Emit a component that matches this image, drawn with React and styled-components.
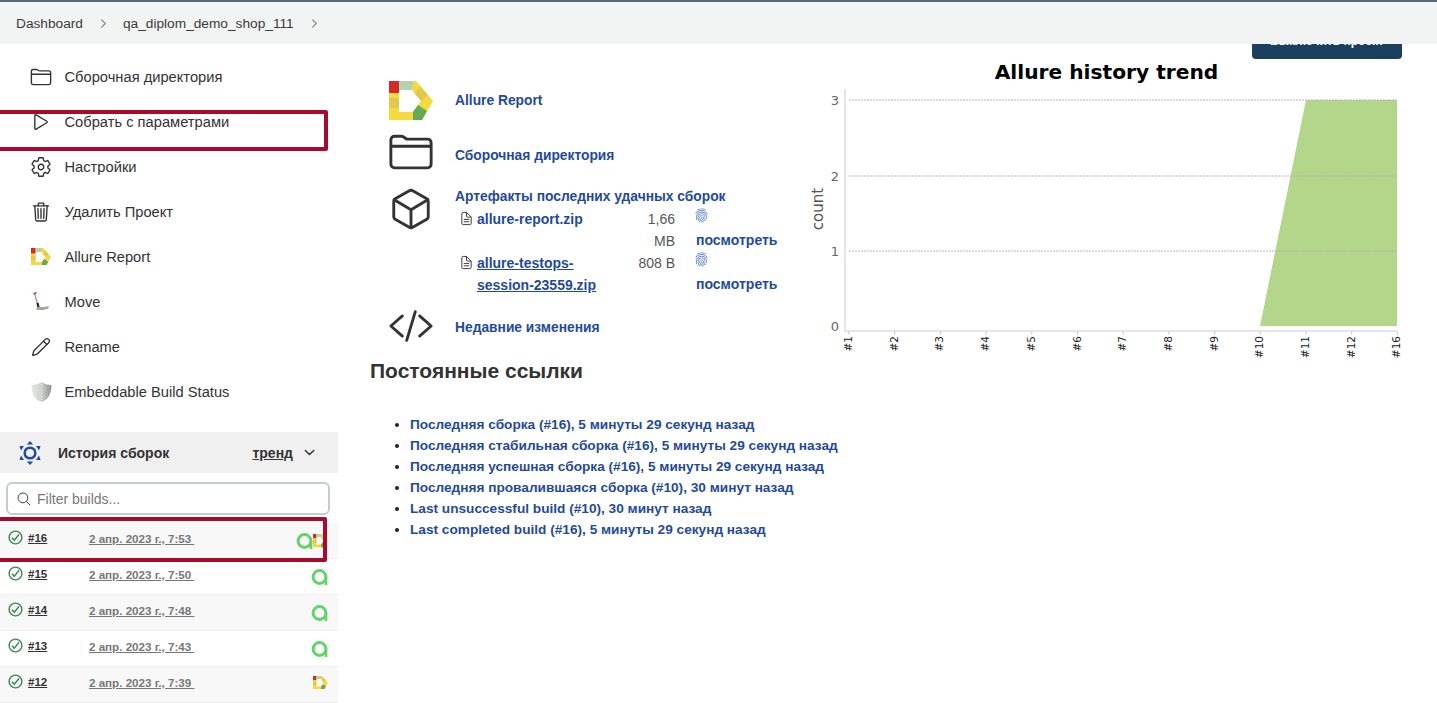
import React from 'react';
import styled, { createGlobalStyle } from 'styled-components';
import {
    IoFolderOutline, IoPlayOutline, IoSettingsOutline, IoTrashOutline,
    IoCubeOutline, IoCodeSlashOutline, IoSearchOutline, IoChevronForward, IoChevronDown,
    IoCheckmarkCircleOutline, IoDocumentTextOutline, IoFingerPrint,
} from 'react-icons/io5';
import { Pencil } from 'lucide-react';

const GlobalStyle = createGlobalStyle`
    html, body {
        margin: 0;
        height: 703px;
        overflow: hidden;
        background: #fff;
        color: #333;
        font-family: 'Liberation Sans', Arial, sans-serif;
    }
`;

const Header = styled.header`
    position: relative;
    z-index: 2;
    display: flex;
    align-items: center;
    height: 42px;
    padding-left: 16px;
    border-top: 2px solid #56677a;
    background: #f2f3f3;
    font-size: 13.7px;
`;
const Crumb = styled.span`
    color: #3a3a3a;
`;
const CrumbArrow = styled.span`
    display: flex;
    margin: 0 13px 0 14px;
    color: #888;
    font-size: 13px;
`;

const Body = styled.div`
    display: flex;
`;

const Sidebar = styled.aside`
    position: relative;
    flex: 0 0 338px;
    padding-top: 10px;
`;
const NavItem = styled.div`
    display: flex;
    align-items: center;
    height: 45px;
    padding-left: 30px;
    font-size: 14.7px;
    color: #333;
`;
const NavIcon = styled.span`
    display: flex;
    justify-content: center;
    flex: 0 0 22px;
    margin-right: 12.500px;
    font-size: 22px;
    color: #333;
`;

const HistoryBar = styled.div`
    display: flex;
    align-items: center;
    height: 41px;
    margin-top: 18px;
    padding: 0 21px 0 19px;
    background: #f0f0f1;
    font-size: 14px;
    font-weight: 700;
`;
const HistoryTitle = styled.span`
    flex: 1;
    margin-left: 17px;
`;
const TrendLink = styled.span`
    margin-right: 9px;
    text-decoration: underline;
`;

const FilterBox = styled.div`
    display: flex;
    align-items: center;
    box-sizing: border-box;
    height: 33px;
    margin: 9px 8px 8px 6px;
    padding-left: 8px;
    border: 2px solid #c6ccd1;
    border-radius: 6px;
    color: #777;
    font-size: 14px;
`;
const FilterIcon = styled.span`
    display: flex;
    margin-right: 5px;
    color: #444;
    font-size: 16px;
`;

const BuildRow = styled.div`
    display: flex;
    align-items: flex-start;
    box-sizing: border-box;
    height: 36px;
    padding: 6px 10px 0 7px;
    border-bottom: 1px solid #f0f0f0;
    background: ${(props) => (props.$shaded ? '#f8f8f8' : '#fff')};
`;
const BuildStatus = styled.span`
    display: flex;
    margin-right: 4px;
    color: #3d8a55;
    font-size: 17px;
    svg path {
        stroke-width: 44px;
    }
`;
const BuildNumber = styled.span`
    flex: 0 0 61px;
    padding-top: 3px;
    color: #333;
    font-size: 11.5px;
    font-weight: 700;
    text-decoration: underline;
`;
const BuildDate = styled.span`
    flex: 1;
    padding-top: 3px;
    color: #777;
    font-size: 11.6px;
    font-weight: 700;
    text-decoration: underline;
    white-space: pre;
`;
const BuildBadges = styled.span`
    display: flex;
    align-items: center;
    margin-top: 3px;
`;

const Highlight = styled.div`
    position: absolute;
    left: -4px;
    top: ${(props) => props.$top}px;
    box-sizing: border-box;
    width: ${(props) => props.$width}px;
    height: ${(props) => props.$height}px;
    border: 4px solid #a80a2b;
    border-radius: 2px;
`;

const Main = styled.main`
    position: relative;
    flex: 1;
    padding: 8px 0 0 32px;
`;
const DisableButton = styled.button`
    position: absolute;
    top: -21px;
    right: 35px;
    width: 150px;
    height: 36px;
    border: none;
    border-radius: 4px;
    background: #1b3f5f;
    color: #fff;
    font-family: inherit;
    font-size: 12px;
    font-weight: 700;
`;
const TopRow = styled.div`
    display: flex;
    align-items: flex-start;
`;
const ProjectLinks = styled.div`
    flex: 0 0 422px;
    margin-left: 18px;
    padding-top: 29px;
`;
const ProjectRow = styled.div`
    display: flex;
    align-items: ${(props) => props.$align || 'center'};
    height: ${(props) => props.$height || 40}px;
    margin-bottom: ${(props) => props.$gap}px;
`;
const ProjectIcon = styled.span`
    display: flex;
    justify-content: center;
    align-self: flex-start;
    flex: 0 0 46px;
    min-width: 0;
    margin-right: 21px;
    margin-top: ${(props) => props.$top || 0}px;
    color: #333;
    font-size: ${(props) => props.$size || 46}px;
`;
const ProjectLink = styled.a`
    color: #1f4a9e;
    font-size: 13.8px;
    font-weight: 700;
`;
const ArtifactBlock = styled.div`
    flex: 1;
    padding-top: 1px;
`;
const ArtifactGrid = styled.div`
    display: grid;
    grid-template-columns: 22px 150px 48px 101px;
    margin-top: 3px;
    font-size: 14px;
    line-height: 22px;
`;
const FileIcon = styled.span`
    display: flex;
    justify-content: center;
    padding-top: 3px;
    color: #333;
    font-size: 15px;
`;
const FileLink = styled.a`
    padding-right: 10px;
    color: #1f4a9e;
    font-weight: 700;
    text-decoration: ${(props) => (props.$underline ? 'underline' : 'none')};
`;
const FileSize = styled.span`
    color: #555;
    text-align: right;
`;
const ViewCell = styled.span`
    display: flex;
    flex-direction: column;
    padding-left: 21px;
    color: #1f4a9e;
    font-weight: 700;
`;
const PrintIcon = styled.span`
    display: flex;
    height: 21px;
    margin-left: -2px;
    color: #6f8fcc;
    font-size: 15px;
`;

const ChartFrame = styled.svg`
    flex: 0 0 600px;
    display: block;
`;

const Heading = styled.h2`
    margin: 0;
    color: #333;
    font-size: 21px;
    line-height: 24px;
    font-weight: 700;
`;
const PermaList = styled.ul`
    margin: 31px 0 0;
    padding-left: 40px;
`;
const PermaItem = styled.li`
    color: #1f4a9e;
    font-size: 13.65px;
    font-weight: 700;
    line-height: 21px;
    &::marker {
        color: #222;
    }
`;

const AllureLogo = ({ size }) => (
    <svg width={size} height={size * 39 / 44} viewBox="0 0 44 39">
        <path fill="#f6d93f" fillRule="evenodd" d="M0 0H27L44 20L33 39H0Z M10 9V31H24L32 20L23 9Z" />
        <path fill="#e2c84c" d="M0 17h10v10H0z" />
        <path fill="#d8292a" d="M0 0h10v12H0z" />
        <path fill="#b2d4a8" d="M10 0h14.500L23 9H10z" />
        <path fill="#e2c84c" d="M31 5L39 14L32 20L26 13Z" />
        <path fill="#62ab52" d="M24 39V31L29 24L38 30L33 39Z" />
    </svg>
);

const TestOpsLogo = () => (
    <svg width="17" height="18" viewBox="0 0 17 18">
        <circle cx="8.5" cy="9" r="6.4" fill="none" stroke="#62d46a" strokeWidth="3" />
        <path d="M15 9v8" stroke="#62d46a" strokeWidth="2.6" fill="none" />
    </svg>
);

const MoveIcon = () => (
    <svg width="20" height="22" viewBox="0 0 20 22">
        <path d="M3.500 2l3.500 13" stroke="#9a9a9a" strokeWidth="1.300" />
        <path d="M2.500 3l3-1.500" stroke="#c0454a" strokeWidth="1.500" />
        <path d="M6.500 12l1 4" stroke="#222" strokeWidth="2.200" />
        <path d="M5.500 16h8l4-1v2.500l-5 1.500h-7z" fill="#a5a8a0" />
    </svg>
);

const ShieldIcon = () => (
    <svg width="21" height="22" viewBox="0 0 21 22">
        <defs>
            <linearGradient id="shieldFill" x1="0" x2="1" y1="0" y2="0">
                <stop offset="0" stopColor="#e6e7e2" />
                <stop offset="0.5" stopColor="#cfd1cb" />
                <stop offset="1" stopColor="#8f928d" />
            </linearGradient>
        </defs>
        <path fill="url(#shieldFill)" d="M10.5 1c3 2 6 3 10 3 0 8-3 15-10 17C3.500 19 .5 12 .5 4c4 0 7-1 10-3z" />
        <path d="M10.500 3v16" stroke="#f0f0ee" strokeWidth="1" strokeDasharray="1 2" />
    </svg>
);

const HistoryIcon = () => (
    <svg width="22" height="24" viewBox="0 0 22 24">
        <circle cx="11" cy="12" r="5.300" fill="none" stroke="#1f4a9e" strokeWidth="2.600" />
        <path fill="#1f4a9e" d="M11 0l3.200 3.500H7.800zM11 24l-3.200-3.500h6.400zM.5 5h4.500L2 9.500zM21.500 5H17l3 4.500zM.5 19H5l-3-4.500zM21.500 19H17l3-4.500z" />
    </svg>
);

const navItems = [
    { label: 'Сборочная директория', icon: <IoFolderOutline /> },
    { label: 'Собрать с параметрами', icon: <IoPlayOutline /> },
    { label: 'Настройки', icon: <IoSettingsOutline /> },
    { label: 'Удалить Проект', icon: <IoTrashOutline /> },
    { label: 'Allure Report', icon: <AllureLogo size={20} /> },
    { label: 'Move', icon: <MoveIcon /> },
    { label: 'Rename', icon: <Pencil size={20} strokeWidth={1.6} /> },
    { label: 'Embeddable Build Status', icon: <ShieldIcon /> },
];

const builds = [
    { id: 16, time: '7:53', badges: ['ops', 'allure'] },
    { id: 15, time: '7:50', badges: ['ops'] },
    { id: 14, time: '7:48', badges: ['ops'] },
    { id: 13, time: '7:43', badges: ['ops'] },
    { id: 12, time: '7:39', badges: ['allure'] },
];

const permalinks = [
    'Последняя сборка (#16), 5 минуты 29 секунд назад',
    'Последняя стабильная сборка (#16), 5 минуты 29 секунд назад',
    'Последняя успешная сборка (#16), 5 минуты 29 секунд назад',
    'Последняя провалившаяся сборка (#10), 30 минут назад',
    'Last unsuccessful build (#10), 30 минут назад',
    'Last completed build (#16), 5 минуты 29 секунд назад',
];

const chartLabels = ['#1', '#2', '#3', '#4', '#5', '#6', '#7', '#8', '#9', '#10', '#11', '#12', '#16'];

const TrendChart = () => {
    const tickX = (i) => 39 + i * 45.7;
    return (
        <ChartFrame width="600" height="307" viewBox="0 0 600 307">
            <text x="296.500" y="27" textAnchor="middle" fontFamily="'DejaVu Sans', sans-serif" fontSize="20.200" fontWeight="700" fill="#000">
                Allure history trend
            </text>
            <path d="M450 274L496 48H587V274Z" fill="#b3d68a" />
            {[48, 124, 199].map((y) => (
                <line key={y} x1="39" x2="587" y1={y} y2={y} stroke="#b5b5b5" strokeWidth="1" strokeDasharray="2 1" />
            ))}
            <path d="M35 37V279H587" fill="none" stroke="#ccc" strokeWidth="1" />
            {[['3', 48], ['2', 124], ['1', 199], ['0', 274]].map(([label, y]) => (
                <text key={label} x="29" y={y + 5} textAnchor="end" fontFamily="'DejaVu Sans', sans-serif" fontSize="13" fill="#666">
                    {label}
                </text>
            ))}
            <text transform="translate(13 157) rotate(-90)" textAnchor="middle" fontFamily="'DejaVu Sans', sans-serif" fontSize="15" fill="#555">
                count
            </text>
            {chartLabels.map((label, i) => (
                <g key={label}>
                    <line x1={tickX(i)} x2={tickX(i)} y1="279" y2="283" stroke="#ccc" />
                    <text transform={`translate(${tickX(i) + 3} 284) rotate(-90)`} textAnchor="end" fontFamily="'DejaVu Sans', sans-serif" fontSize="10.500" fill="#222">
                        {label}
                    </text>
                </g>
            ))}
        </ChartFrame>
    );
};

const App = () => (
    <>
        <GlobalStyle />
        <Header>
            <Crumb>Dashboard</Crumb>
            <CrumbArrow><IoChevronForward /></CrumbArrow>
            <Crumb>qa_diplom_demo_shop_111</Crumb>
            <CrumbArrow><IoChevronForward /></CrumbArrow>
        </Header>
        <Body>
            <Sidebar>
                {navItems.map((item) => (
                    <NavItem key={item.label}>
                        <NavIcon>{item.icon}</NavIcon>
                        {item.label}
                    </NavItem>
                ))}
                <HistoryBar>
                    <HistoryIcon />
                    <HistoryTitle>История сборок</HistoryTitle>
                    <TrendLink>тренд</TrendLink>
                    <IoChevronDown size={15} />
                </HistoryBar>
                <FilterBox>
                    <FilterIcon><IoSearchOutline /></FilterIcon>
                    Filter builds...
                </FilterBox>
                {builds.map((build, i) => (
                    <BuildRow key={build.id} $shaded={i % 2 === 0}>
                        <BuildStatus><IoCheckmarkCircleOutline /></BuildStatus>
                        <BuildNumber>#{build.id}</BuildNumber>
                        <BuildDate>{`2 апр. 2023 г., ${build.time} `}</BuildDate>
                        <BuildBadges>
                            {build.badges.map((badge) => (
                                badge === 'ops' ? <TestOpsLogo key={badge} /> : <AllureLogo key={badge} size={15} />
                            ))}
                        </BuildBadges>
                    </BuildRow>
                ))}
                <Highlight $top={66} $width={332} $height={41} />
                <Highlight $top={473} $width={331} $height={45} />
            </Sidebar>
            <Main>
                <DisableButton>Выключить проект</DisableButton>
                <TopRow>
                    <ProjectLinks>
                        <ProjectRow $height={39} $gap={15}>
                            <ProjectIcon><AllureLogo size={44} /></ProjectIcon>
                            <ProjectLink>Allure Report</ProjectLink>
                        </ProjectRow>
                        <ProjectRow $gap={11}>
                            <ProjectIcon $top={-6}><IoFolderOutline /></ProjectIcon>
                            <ProjectLink>Сборочная директория</ProjectLink>
                        </ProjectRow>
                        <ProjectRow $height={110} $gap={11} $align="flex-start">
                            <ProjectIcon><IoCubeOutline /></ProjectIcon>
                            <ArtifactBlock>
                                <ProjectLink>Артефакты последних удачных сборок</ProjectLink>
                                <ArtifactGrid>
                                    <FileIcon><IoDocumentTextOutline /></FileIcon>
                                    <FileLink>allure-report.zip</FileLink>
                                    <FileSize>1,66 MB</FileSize>
                                    <ViewCell><PrintIcon><IoFingerPrint /></PrintIcon>посмотреть</ViewCell>
                                    <FileIcon><IoDocumentTextOutline /></FileIcon>
                                    <FileLink $underline>allure-testops-session-23559.zip</FileLink>
                                    <FileSize>808 B</FileSize>
                                    <ViewCell><PrintIcon><IoFingerPrint /></PrintIcon>посмотреть</ViewCell>
                                </ArtifactGrid>
                            </ArtifactBlock>
                        </ProjectRow>
                        <ProjectRow $gap={0}>
                            <ProjectIcon $top={-5} $size={48}><IoCodeSlashOutline /></ProjectIcon>
                            <ProjectLink>Недавние изменения</ProjectLink>
                        </ProjectRow>
                    </ProjectLinks>
                    <TrendChart />
                </TopRow>
                <Heading>Постоянные ссылки</Heading>
                <PermaList>
                    {permalinks.map((link) => (
                        <PermaItem key={link}>{link}</PermaItem>
                    ))}
                </PermaList>
            </Main>
        </Body>
    </>
);

export default App;
